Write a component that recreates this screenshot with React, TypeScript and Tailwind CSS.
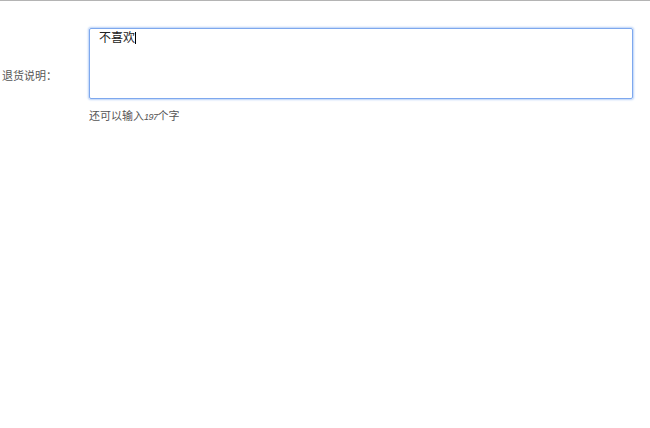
import React from "react";

const font = { fontFamily: '"Liberation Sans", "Noto Sans CJK SC", sans-serif' };

export default function App() {
  return (
    <div className="w-[650px] h-[428px] bg-white border-t border-[#b4b4b4]" style={font}>
      <div className="flex pt-[27px]">
        <div className="w-[89px] pl-[2px] flex items-center text-[11px] text-[#555] leading-none">
          退货说明：
        </div>
        <div className="flex flex-col">
          <div className="w-[544px] h-[71px] rounded-[2px] border border-[#7ea8ee] shadow-[0_0_2px_1px_#b9d1f7] pl-[9px] pt-[2px] text-[12px] leading-[14px] text-[#222]">
            不喜欢<span className="inline-block w-px h-[12px] bg-black align-[-2px]"></span>
          </div>
          <div className="mt-[10px] text-[11px] leading-[14px] text-[#555]">
            还可以输入<i className="italic text-[9px] tracking-[-0.5px]">197</i>个字
          </div>
        </div>
      </div>
    </div>
  );
}
